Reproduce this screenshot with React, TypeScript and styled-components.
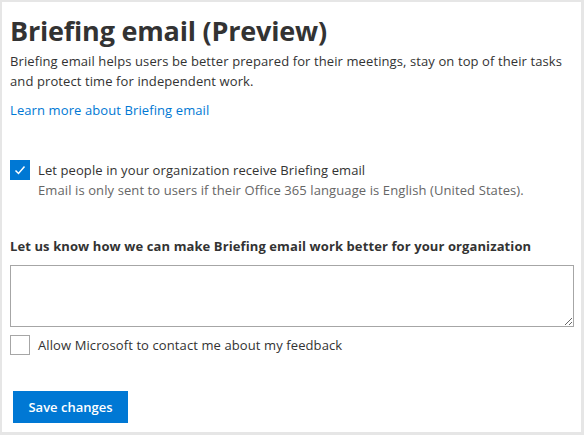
import React, { useState } from "react";
import styled, { createGlobalStyle } from "styled-components";

const Global = createGlobalStyle`
  html, body { margin: 0; padding: 0; background: #fff; }
  * { box-sizing: border-box; }
`;

const Frame = styled.div`
  width: 584px;
  height: 435px;
  border-style: solid;
  border-color: #e6e6e6;
  border-width: 2px 3px 3px 2px;
  background: #fff;
  padding: 10px 8px 0 8px;
  font-family: "Open Sans", "Liberation Sans", sans-serif;
  color: #333;
  display: flex;
  flex-direction: column;
  letter-spacing: 0.1px;
`;

const Title = styled.h1`
  margin: 0;
  font-size: 27px;
  font-weight: 700;
  line-height: 38px;
  color: #333;
  letter-spacing: -0.2px;
`;

const Body = styled.p`
  margin: 1px 0 0 0;
  font-size: 13px;
  line-height: 20px;
  color: #333;
`;

const Link = styled.a`
  margin-top: 9px;
  font-size: 13px;
  line-height: 20px;
  color: #0078d4;
  text-decoration: none;
  align-self: flex-start;
`;

const CheckRow = styled.label<{ $top: number }>`
  display: flex;
  gap: 8px;
  margin-top: ${(p) => p.$top}px;
  cursor: pointer;
`;

const Box = styled.span<{ $checked: boolean }>`
  flex: none;
  width: 20px;
  height: 20px;
  border: 1px solid ${(p) => (p.$checked ? "#0078d4" : "#a6a6a6")};
  background: ${(p) => (p.$checked ? "#0078d4" : "#fff")};
  display: flex;
  align-items: center;
  justify-content: center;
`;

const CheckText = styled.div`
  display: flex;
  flex-direction: column;
`;

const CheckLabel = styled.span`
  font-size: 13px;
  line-height: 20px;
  color: #333;
`;

const CheckHint = styled.span`
  font-size: 13px;
  line-height: 20px;
  color: #666;
`;

const SectionLabel = styled.div`
  margin-top: 36px;
  font-size: 13px;
  font-weight: 700;
  line-height: 20px;
  color: #333;
`;

const TextArea = styled.textarea`
  margin-top: 9px;
  width: 564px;
  height: 62px;
  border: 1px solid #a6a6a6;
  border-radius: 0;
  resize: both;
  font-family: inherit;
  font-size: 13px;
  outline: none;
  display: block;
`;

const Button = styled.button`
  margin-top: 36px;
  margin-left: 3px;
  align-self: flex-start;
  width: 115px;
  height: 32px;
  border: none;
  background: #0078d4;
  color: #fff;
  font-family: inherit;
  font-size: 13px;
  font-weight: 600;
  cursor: pointer;
`;

const Check = () => (
  <svg width="14" height="14" viewBox="0 0 14 14">
    <path d="M2.5 7.5 L5.5 10.5 L11.5 3.5" fill="none" stroke="#fff" strokeWidth="1.5" />
  </svg>
);

export default function App() {
  const [a, setA] = useState(true);
  const [b, setB] = useState(false);
  return (
    <>
      <Global />
      <Frame>
        <Title>Briefing email (Preview)</Title>
        <Body>
          Briefing email helps users be better prepared for their meetings, stay on top of their tasks
          and protect time for independent work.
        </Body>
        <Link href="#">Learn more about Briefing email</Link>
        <CheckRow $top={40} onClick={(e) => { e.preventDefault(); setA(!a); }}>
          <Box $checked={a}>{a && <Check />}</Box>
          <CheckText>
            <CheckLabel>Let people in your organization receive Briefing email</CheckLabel>
            <CheckHint>Email is only sent to users if their Office 365 language is English (United States).</CheckHint>
          </CheckText>
        </CheckRow>
        <SectionLabel>Let us know how we can make Briefing email work better for your organization</SectionLabel>
        <TextArea />
        <CheckRow $top={8} onClick={(e) => { e.preventDefault(); setB(!b); }}>
          <Box $checked={b}>{b && <Check />}</Box>
          <CheckText>
            <CheckLabel>Allow Microsoft to contact me about my feedback</CheckLabel>
          </CheckText>
        </CheckRow>
        <Button>Save changes</Button>
      </Frame>
    </>
  );
}
